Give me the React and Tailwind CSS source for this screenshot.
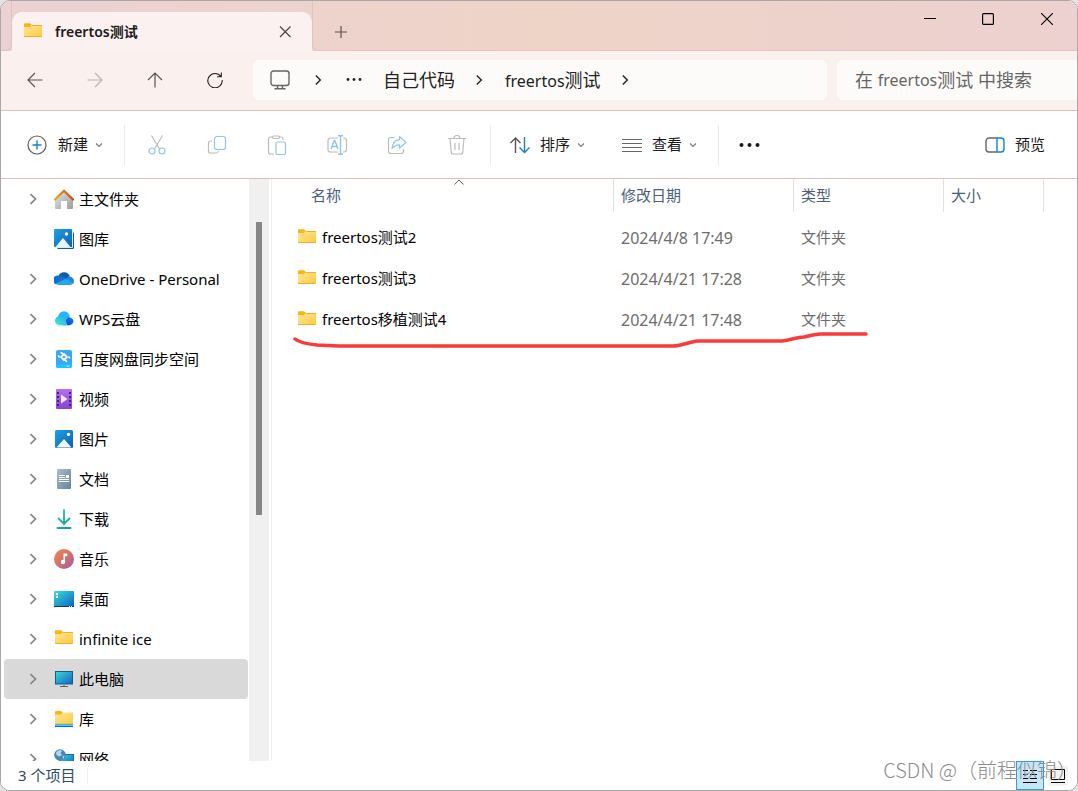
import { useState } from "react";

const FolderIcon = () => (
  <svg width="20" height="20" viewBox="0 0 20 20" className="shrink-0">
    <defs>
      <linearGradient id="folder" x1="0" y1="0" x2="1" y2="1">
        <stop offset="0" stopColor="#ffe6a0" />
        <stop offset="1" stopColor="#ffc938" />
      </linearGradient>
    </defs>
    <path d="M1 2.200a1 1 0 0 1 1-1h5l2 1.800v3H1z" fill="#fbb414" />
    <path d="M1 5h6l2-2h9.400a.6.6 0 0 1 .6.6V14.400a.6.6 0 0 1-.6.6H1.600a.6.6 0 0 1-.6-.6z" fill="url(#folder)" />
    <path d="M1 14.500h18M9 3.500h10" stroke="#efb02b" />
  </svg>
);

const HomeIcon = () => (
  <svg width="20" height="20" viewBox="0 0 20 20" className="shrink-0">
    <defs>
      <linearGradient id="wall" x1="0" y1="0" x2="1" y2="1">
        <stop offset="0" stopColor="#e6e6e6" />
        <stop offset="1" stopColor="#9c9c9c" />
      </linearGradient>
      <linearGradient id="roof" x1="0" y1="0" x2="1" y2="0">
        <stop offset="0" stopColor="#f2a01f" />
        <stop offset="1" stopColor="#d1430d" />
      </linearGradient>
    </defs>
    <path d="M1 9.500L10 1.500l9 8V19a1 1 0 0 1-1 1h-5v-8H7v8H2a1 1 0 0 1-1-1z" fill="url(#wall)" />
    <path d="M1 10.500L10 1.700l9 8.800" fill="none" stroke="url(#roof)" strokeWidth="2.200" strokeLinecap="round" strokeLinejoin="round" />
  </svg>
);

const GalleryIcon = () => (
  <svg width="20" height="20" viewBox="0 0 20 20" className="shrink-0">
    <defs>
      <linearGradient id="sky" x1="0" y1="0" x2="1" y2="1">
        <stop offset="0" stopColor="#1fa2e4" />
        <stop offset="1" stopColor="#0a5fb4" />
      </linearGradient>
    </defs>
    <rect x="3" y="3" width="17" height="17" rx="1.500" fill="#0f5ba7" />
    <path d="M18.500 1v17.500H1" fill="none" stroke="#d8ecfa" />
    <rect x="0" y="0" width="18" height="18" rx="1" fill="url(#sky)" />
    <path d="M1.500 18l7.500-9 7.500 9z" fill="#e9f5fd" />
    <circle cx="12.500" cy="5" r="1.700" fill="#fff" />
  </svg>
);

const PictureIcon = () => (
  <svg width="20" height="20" viewBox="0 0 20 20" className="shrink-0">
    <rect x="1" y="1" width="18" height="18" rx="1.500" fill="url(#sky)" />
    <path d="M2.500 18.500l7.500-8.500 7.500 8.500z" fill="#f2f9fe" />
    <circle cx="14.500" cy="5.500" r="1.700" fill="#fff" />
  </svg>
);

const OneDriveIcon = () => (
  <svg width="20" height="20" viewBox="0 0 20 20" className="shrink-0">
    <path d="M4.500 7A6 6 0 0 1 15.800 7.500L10 11z" fill="#0a5cb0" />
    <path d="M10 11l4-3.200a4.600 4.600 0 0 1 6 4.400 4 4 0 0 1-1 2.800z" fill="#1a86dc" />
    <path d="M4.500 6.800c2-.4 3.500.2 5.500 1.500l3 2-11 5A4.300 4.300 0 0 1 4.500 6.800z" fill="#0d70cf" />
    <path d="M1.500 14.500L11.200 10c2 .2 5.800 2.200 7.800 4.300a3.500 3.500 0 0 1-2.700 1.700H4.500a4 4 0 0 1-3-1.500z" fill="#29a4ea" />
  </svg>
);

const WpsIcon = () => (
  <svg width="20" height="20" viewBox="0 0 20 20" className="shrink-0">
    <defs>
      <linearGradient id="wpsLeft" x1="0" y1="1" x2="1" y2="0">
        <stop offset="0" stopColor="#3df0c0" />
        <stop offset="1" stopColor="#25a4ff" />
      </linearGradient>
      <linearGradient id="wpsRight" x1="0" y1="1" x2="1" y2="0">
        <stop offset="0" stopColor="#0040c8" />
        <stop offset="1" stopColor="#107cf5" />
      </linearGradient>
    </defs>
    <circle cx="10" cy="8" r="5.800" fill="#26b5fb" />
    <path d="M8 16.200l6-7.700A4.800 4.800 0 0 1 19.500 12a4.300 4.300 0 0 1-4.500 4.200z" fill="url(#wpsRight)" />
    <path d="M5.500 7.200c3 0 4.500 2 6 4.300l2 4.700h-8a4.500 4.500 0 0 1 0-9z" fill="url(#wpsLeft)" />
  </svg>
);

const BaiduIcon = () => (
  <svg width="20" height="20" viewBox="0 0 20 20" className="shrink-0">
    <rect x="2" y="1" width="16" height="18" rx="2" fill="#38a7fb" />
    <path d="M2 15.500h16V17a2 2 0 0 1-2 2H4a2 2 0 0 1-2-2z" fill="#15c9f8" />
    <path d="M12.500 17h3" stroke="#d7f7ff" />
    <path d="M10 5l3 3-3 3-3-3z" fill="none" stroke="#fff" strokeWidth="1.800" strokeLinejoin="round" />
    <path d="M8.500 4.500L7.200 3.800M5.200 8L4.500 7M14.800 8l.8.800M11.500 11.500l1 .8" stroke="#fff" strokeWidth="1.600" strokeLinecap="round" />
  </svg>
);

const VideoIcon = () => (
  <svg width="20" height="20" viewBox="0 0 20 20" className="shrink-0">
    <defs>
      <linearGradient id="film" x1="0" y1="0" x2="0" y2="1">
        <stop offset="0" stopColor="#b571f2" />
        <stop offset="1" stopColor="#8640d8" />
      </linearGradient>
    </defs>
    <rect x="2" y="0" width="16" height="20" rx="1" fill="url(#film)" />
    <path d="M4 3v15M16 3v15" stroke="#43256e" strokeWidth="2" strokeDasharray="2 2" />
    <path d="M7 5.500l6.500 4.500L7 14.500z" fill="#f2eafa" />
  </svg>
);

const DocumentIcon = () => (
  <svg width="20" height="20" viewBox="0 0 20 20" className="shrink-0">
    <defs>
      <linearGradient id="paper" x1="0" y1="0" x2="1" y2="1">
        <stop offset="0" stopColor="#a9bdd3" />
        <stop offset="1" stopColor="#63819f" />
      </linearGradient>
    </defs>
    <rect x="3" y="0" width="14" height="20" rx="1" fill="url(#paper)" />
    <path d="M5 6.500h6M5 8.500h6M5 10.500h10M5 12.500h10" stroke="#fff" />
    <rect x="12" y="6" width="3" height="3" fill="#fff" />
  </svg>
);

const DownloadIcon = () => (
  <svg width="20" height="20" viewBox="0 0 20 20" className="shrink-0">
    <defs>
      <linearGradient id="down" gradientUnits="userSpaceOnUse" x1="4" y1="0" x2="16" y2="20">
        <stop offset="0" stopColor="#36cf90" />
        <stop offset="1" stopColor="#0b9c9c" />
      </linearGradient>
    </defs>
    <path d="M10 1v13M4.500 9.500L10 15l5.500-5.500M3.500 19h13" fill="none" stroke="url(#down)" strokeWidth="1.900" strokeLinecap="round" />
  </svg>
);

const MusicIcon = () => (
  <svg width="20" height="20" viewBox="0 0 20 20" className="shrink-0">
    <defs>
      <linearGradient id="disc" x1="0" y1="0" x2="1" y2="1">
        <stop offset="0" stopColor="#ef8b51" />
        <stop offset="0.600" stopColor="#cc6b74" />
        <stop offset="1" stopColor="#8f5fb3" />
      </linearGradient>
    </defs>
    <circle cx="10" cy="10" r="10" fill="url(#disc)" />
    <path d="M9.500 4.500h3.800v2.700h-2.300v5.800h-1.500z" fill="#fff" />
    <circle cx="9" cy="13" r="2.200" fill="#fff" />
  </svg>
);

const DesktopIcon = () => (
  <svg width="20" height="20" viewBox="0 0 20 20" className="shrink-0">
    <defs>
      <linearGradient id="screen" x1="0" y1="0" x2="1" y2="1">
        <stop offset="0" stopColor="#3bdadf" />
        <stop offset="1" stopColor="#0c64bf" />
      </linearGradient>
    </defs>
    <rect x="0" y="2" width="20" height="16" rx="1" fill="url(#screen)" />
    <path d="M0 17.500h20" stroke="#0c3c70" />
    <path d="M15 17.500h3" stroke="#fff" strokeDasharray="1 1" />
    <path d="M3 4v5" stroke="#fff" strokeWidth="2" strokeDasharray="2 1" />
  </svg>
);

const ComputerIcon = () => (
  <svg width="20" height="20" viewBox="0 0 20 20" className="shrink-0">
    <rect x="1.500" y="2.500" width="17" height="12.500" fill="url(#screen)" stroke="#1d5b83" />
    <path d="M10 15v2" stroke="#8d979f" strokeWidth="2" />
    <path d="M6 17.500h8" stroke="#5b6368" />
  </svg>
);

const LibraryIcon = () => (
  <svg width="20" height="20" viewBox="0 0 20 20" className="shrink-0">
    <path d="M1 3a1 1 0 0 1 1-1h5l2 1.800v3H1z" fill="#fbb414" />
    <path d="M1 5.500h6l2-2h10V16H1z" fill="url(#folder)" />
    <path d="M1 15.500h18" stroke="#2cc4ea" strokeWidth="1.500" />
    <path d="M1 17.300h18" stroke="#126fb7" strokeWidth="1.500" />
  </svg>
);

const NetworkIcon = () => (
  <svg width="20" height="20" viewBox="0 0 20 20" className="shrink-0">
    <rect x="5.500" y="5.500" width="14" height="11" fill="url(#screen)" stroke="#1d6f93" />
    <circle cx="6" cy="6" r="5.800" fill="#4888b4" />
    <path d="M2 3.500C4 1 6 1 8 1.500L6.500 4 8 6 5 7.500 2.500 6zM8.500 6.500l2 1-1.500 3z" fill="#b9d6e8" />
  </svg>
);

const Chevron = () => (
  <svg width="12" height="12" viewBox="0 0 12 12" className="shrink-0" fill="none" stroke="#868686" strokeWidth="1.700">
    <path d="M3.500 1.200L8.500 6l-5 4.800" />
  </svg>
);

const Caret = () => (
  <svg width="8" height="8" viewBox="0 0 8 8" fill="none" stroke="#777" strokeWidth="1.100">
    <path d="M1 2.500l3 3 3-3" />
  </svg>
);

const PathArrow = ({ className }) => (
  <svg width="12" height="12" viewBox="0 0 12 12" className={className} fill="none" stroke="#222" strokeWidth="1.400">
    <path d="M3.800 1.500L8.300 6l-4.500 4.500" />
  </svg>
);

const places = [
  { name: "主文件夹", icon: HomeIcon },
  { name: "图库", icon: GalleryIcon, leaf: true },
  { name: "OneDrive - Personal", icon: OneDriveIcon },
  { name: "WPS云盘", icon: WpsIcon },
  { name: "百度网盘同步空间", icon: BaiduIcon },
  { name: "视频", icon: VideoIcon },
  { name: "图片", icon: PictureIcon },
  { name: "文档", icon: DocumentIcon },
  { name: "下载", icon: DownloadIcon },
  { name: "音乐", icon: MusicIcon },
  { name: "桌面", icon: DesktopIcon },
  { name: "infinite ice", icon: FolderIcon },
  { name: "此电脑", icon: ComputerIcon },
  { name: "库", icon: LibraryIcon },
  { name: "网络", icon: NetworkIcon },
];

const files = [
  { name: "freertos测试2", date: "2024/4/8 17:49", type: "文件夹" },
  { name: "freertos测试3", date: "2024/4/21 17:28", type: "文件夹" },
  { name: "freertos移植测试4", date: "2024/4/21 17:48", type: "文件夹" },
];

const TitleBar = () => (
  <header className="flex h-[50px] shrink-0 bg-linear-to-r from-[#ecd1d4] via-[#eed4c7] to-[#ecd1d0]">
    <div className="w-[11px] rounded-br-md border-b border-r border-[#dfc3c0]" />
    <div className="flex w-[300px] mt-[11px] pl-[11px] pr-[19px] items-center rounded-t-[10px] bg-[#faf1f0]">
      <FolderIcon />
      <span className="ml-3 flex-1 text-sm font-semibold text-[#1b1b1b]">freertos测试</span>
      <button aria-label="关闭标签页">
        <svg width="16" height="16" viewBox="0 0 16 16" stroke="#444" strokeWidth="1.100">
          <path d="M3 2.500l10.500 10.500M13.500 2.500L3 13" />
        </svg>
      </button>
    </div>
    <div className="flex flex-1 rounded-bl-md border-b border-l border-[#dfc3c0]">
      <button aria-label="新建标签页" className="ml-5 mt-3 self-center">
        <svg width="16" height="16" viewBox="0 0 16 16" stroke="#555" strokeWidth="1.200">
          <path d="M8 2v12M2 8h12" />
        </svg>
      </button>
      <div className="ml-auto flex h-9">
        <button aria-label="最小化" className="flex w-[58px] items-center justify-center">
          <svg width="12" height="12" viewBox="0 0 12 12" stroke="#000">
            <path d="M0 5.500h12" />
          </svg>
        </button>
        <button aria-label="最大化" className="flex w-[58px] items-center justify-center">
          <svg width="12" height="12" viewBox="0 0 12 12" fill="none" stroke="#000" strokeWidth="1.200">
            <rect x="0.600" y="0.600" width="10.800" height="10.800" rx="1" />
          </svg>
        </button>
        <button aria-label="关闭" className="flex w-[60px] items-center justify-center">
          <svg width="12" height="12" viewBox="0 0 12 12" stroke="#000" strokeWidth="1.100">
            <path d="M0 0l12 12M12 0L0 12" />
          </svg>
        </button>
      </div>
    </div>
  </header>
);

const NavBar = () => {
  const [query, setQuery] = useState("");

  return (
    <div className="flex h-[60px] shrink-0 items-center border-b border-[#dcc0ba] bg-[#faf1ef] pb-px pl-1">
      <button aria-label="后退" className="flex w-[60px] justify-center">
        <svg width="16" height="16" viewBox="0 0 16 16" fill="none" stroke="#555" strokeWidth="1.200">
          <path d="M15.500 8H1M8 1L1 8l7 7" />
        </svg>
      </button>
      <button aria-label="前进" className="flex w-[60px] justify-center">
        <svg width="16" height="16" viewBox="0 0 16 16" fill="none" stroke="#bbb4b2" strokeWidth="1.200">
          <path d="M.5 8H15M8 1l7 7-7 7" />
        </svg>
      </button>
      <button aria-label="向上" className="flex w-[60px] justify-center">
        <svg width="16" height="16" viewBox="0 0 16 16" fill="none" stroke="#555" strokeWidth="1.200">
          <path d="M8 15.500V1M1 8l7-7 7 7" />
        </svg>
      </button>
      <button aria-label="刷新" className="flex w-[60px] justify-center">
        <svg width="16" height="16" viewBox="0 0 16 16" fill="none" stroke="#222" strokeWidth="1.100">
          <path d="M13.900 4.500A7.200 7.200 0 1 0 15.200 8M14.300 .5v4.300h-4.300" />
        </svg>
      </button>

      {/* address */}
      <div className="ml-2 flex h-10 flex-1 items-center rounded-md bg-[#fdfbfa] pl-[17px] text-lg text-[#222]">
        <svg width="20" height="20" viewBox="0 0 20 20" fill="none" stroke="#666" strokeWidth="1.400">
          <rect x="1" y="1" width="18" height="14.500" rx="2.500" />
          <path d="M7.500 15.500v3M12.500 15.500v3M4.500 18.800h11" />
        </svg>
        <PathArrow className="ml-[22px]" />
        <svg width="16" height="4" viewBox="0 0 16 4" className="ml-[22px]" fill="#222">
          <circle cx="2" cy="1.500" r="1.400" />
          <circle cx="8" cy="1.500" r="1.400" />
          <circle cx="14" cy="1.500" r="1.400" />
        </svg>
        <a href="#code" className="ml-[21px]">自己代码</a>
        <PathArrow className="ml-[18px]" />
        <a href="#freertos" className="ml-5">
          <span className="text-base">freertos</span>测试
        </a>
        <PathArrow className="ml-[18px]" />
      </div>

      {/* search */}
      <div className="relative ml-[10px] h-10 w-[240px] rounded-l-md bg-[#fdfbfa] text-lg text-[#666]">
        <input
          id="search"
          aria-label="搜索"
          className="h-10 w-full bg-transparent px-[18px] outline-none"
          value={query}
          onChange={(e) => setQuery(e.target.value)}
        />
        {!query && (
          <label htmlFor="search" className="pointer-events-none absolute inset-0 flex items-center whitespace-pre pl-[18px]">
            在 <span className="text-base">freertos</span>测试 中搜索
          </label>
        )}
      </div>
    </div>
  );
};

const ToolBar = () => (
  <div className="flex h-[68px] shrink-0 items-center border-b border-[#dcc0ba] bg-white pl-[26px] pr-8 text-[15px] text-[#1b1b1b]">
    <button className="flex items-center">
      <svg width="20" height="20" viewBox="0 0 20 20" fill="none">
        <circle cx="10" cy="10" r="9" stroke="#5c5c5c" strokeWidth="1.200" />
        <path d="M10 5.500v9M5.500 10h9" stroke="#1380d8" strokeWidth="1.400" />
      </svg>
      <span className="ml-[11px] mr-[7px]">新建</span>
      <Caret />
    </button>
    <div className="ml-[21px] mr-[2px] h-10 w-px bg-[#eaeaea]" />
    <button aria-label="剪切" className="flex w-[60px] justify-center">
      <svg width="20" height="20" viewBox="0 0 20 20" fill="none" strokeWidth="1.200">
        <path d="M4.500.5L12.500 14M15.500.5L7.500 14" stroke="#bcbcbc" />
        <circle cx="5" cy="16" r="3" stroke="#90c4ee" />
        <circle cx="15" cy="16" r="3" stroke="#90c4ee" />
      </svg>
    </button>
    <button aria-label="复制" className="flex w-[60px] justify-center">
      <svg width="20" height="20" viewBox="0 0 20 20" fill="none" strokeWidth="1.200">
        <path d="M5 6H3.500a2 2 0 0 0-2 2v8a2 2 0 0 0 2 2H9a2.500 2.500 0 0 0 2.500-2" stroke="#bcbcbc" />
        <rect x="7.500" y="1.500" width="11" height="13" rx="2.500" stroke="#90c4ee" />
      </svg>
    </button>
    <button aria-label="粘贴" className="flex w-[60px] justify-center">
      <svg width="20" height="20" viewBox="0 0 20 20" fill="none" strokeWidth="1.200">
        <path d="M6 2H3.500a2 2 0 0 0-2 2v13a2 2 0 0 0 2 2H7M12 2h2a2 2 0 0 1 2 2v1" stroke="#bcbcbc" />
        <rect x="5.500" y="1" width="7" height="2.500" rx="1.200" stroke="#bcbcbc" />
        <rect x="9" y="7" width="9.500" height="12.500" rx="1.500" stroke="#90c4ee" />
      </svg>
    </button>
    <button aria-label="重命名" className="flex w-[60px] justify-center">
      <svg width="20" height="20" viewBox="0 0 20 20" fill="none" strokeWidth="1.200">
        <path d="M11 3H3.500A2.500 2.500 0 0 0 1 5.500v9A2.500 2.500 0 0 0 3.500 17H11M16 3h1a2.500 2.500 0 0 1 2.500 2.500v9A2.500 2.500 0 0 1 17 17h-1" stroke="#bcbcbc" />
        <path d="M4 14l3.200-8.500h.6L11 14M5 11.500h5M13.500 1v18M11 .8h5M11 19.200h5" stroke="#90c4ee" strokeWidth="1.400" />
      </svg>
    </button>
    <button aria-label="共享" className="flex w-[60px] justify-center">
      <svg width="20" height="20" viewBox="0 0 20 20" fill="none" strokeWidth="1.200" strokeLinejoin="round">
        <path d="M7.500 2.500H4A2.500 2.500 0 0 0 1.500 5v11A2.500 2.500 0 0 0 4 18.500h10a2.500 2.500 0 0 0 2.500-2.500v-2" stroke="#bcbcbc" />
        <path d="M12.500 1.500L19 7.500l-6.500 5.500V9.800c-3 0-5 .7-7.500 3.700.5-4.500 3-8.500 7.500-8.800z" stroke="#90c4ee" />
      </svg>
    </button>
    <button aria-label="删除" className="flex w-[60px] justify-center">
      <svg width="20" height="20" viewBox="0 0 20 20" fill="none" stroke="#bcbcbc" strokeWidth="1.200">
        <path d="M1 3.500h18M7 3.500a3 3 0 0 1 6 0M3 3.500l1.200 13.500a2 2 0 0 0 2 2h7.600a2 2 0 0 0 2-2L17 3.500M8 8v7M12 8v7" />
      </svg>
    </button>
    <div className="ml-[3px] h-10 w-px bg-[#eaeaea]" />
    <button className="ml-[19px] flex items-center">
      <svg width="20" height="20" viewBox="0 0 20 20" fill="none" strokeWidth="1.400">
        <path d="M5.500 18V3M.5 8l5-5 5 5" stroke="#555" />
        <path d="M14.500 2v15.500M9.500 12.500l5 5 5-5" stroke="#1380d8" />
      </svg>
      <span className="ml-[10px] mr-[7px]">排序</span>
      <Caret />
    </button>
    <button className="ml-[37px] flex items-center">
      <svg width="20" height="20" viewBox="0 0 20 20" stroke="#666">
        <path d="M0 4.500h20M0 8.500h20M0 12.500h20M0 16.500h20" />
      </svg>
      <span className="ml-[10px] mr-[7px]">查看</span>
      <Caret />
    </button>
    <div className="ml-[21px] h-10 w-px bg-[#eaeaea]" />
    <button aria-label="更多" className="ml-5">
      <svg width="22" height="6" viewBox="0 0 22 6" fill="#1b1b1b">
        <circle cx="2.500" cy="3" r="2" />
        <circle cx="10.500" cy="3" r="2" />
        <circle cx="18.500" cy="3" r="2" />
      </svg>
    </button>
    <button className="ml-auto flex items-center">
      <svg width="20" height="20" viewBox="0 0 20 20" fill="none" strokeWidth="1.400">
        <path d="M11.500 3H4a3 3 0 0 0-3 3v8a3 3 0 0 0 3 3h7.500" stroke="#666" />
        <path d="M12 3h4a3 3 0 0 1 3 3v8a3 3 0 0 1-3 3h-4z" stroke="#1380d8" />
      </svg>
      <span className="ml-[10px]">预览</span>
    </button>
  </div>
);

const Sidebar = () => {
  const [selected, setSelected] = useState("此电脑");

  return (
    <aside className="flex w-[271px] shrink-0 overflow-hidden border-r border-[#f0f0f0]">
      <ul className="w-[248px] pl-[3px] pr-px">
        {places.map(({ name, icon: Icon, leaf }) => (
          <li key={name}>
            <button
              onClick={() => setSelected(name)}
              className={`flex h-10 w-full items-center rounded-sm pl-[23px] text-[15px] text-black ${
                selected === name ? "bg-[#d9d9d9]" : ""
              }`}
            >
              <span className="w-[27px]">{!leaf && <Chevron />}</span>
              <Icon />
              <span className="ml-[5px]">{name}</span>
            </button>
          </li>
        ))}
      </ul>
      {/* scrollbar */}
      <div className="w-5 bg-[#f0f0f0] pt-[43px] pl-[7px]">
        <div className="h-[293px] w-[6px] bg-[#868686]" />
      </div>
    </aside>
  );
};

const FileList = () => (
  <main className="relative min-w-0 flex-1">
    <table className="w-full table-fixed text-left text-[15px]">
      <colgroup>
        <col className="w-[342px]" />
        <col className="w-[180px]" />
        <col className="w-[150px]" />
        <col className="w-[100px]" />
        <col />
      </colgroup>
      <thead className="text-[#4c607a]">
        <tr>
          <th className="relative p-0 font-normal">
            <div className="mb-[5px] flex h-[33px] items-center border-r border-[#e3e3e3] pl-[39px]">名称</div>
            <svg width="10" height="6" viewBox="0 0 10 6" className="absolute left-[182px] top-0" fill="none" stroke="#666">
              <path d="M.5 5.500L5 1l4.500 4.500" />
            </svg>
          </th>
          <th className="p-0 font-normal">
            <div className="mb-[5px] flex h-[33px] items-center border-r border-[#e3e3e3] pl-[7px]">修改日期</div>
          </th>
          <th className="p-0 font-normal">
            <div className="mb-[5px] flex h-[33px] items-center border-r border-[#e3e3e3] pl-[7px]">类型</div>
          </th>
          <th className="p-0 font-normal">
            <div className="mb-[5px] flex h-[33px] items-center border-r border-[#e3e3e3] pl-[7px]">大小</div>
          </th>
          <td />
        </tr>
      </thead>
      <tbody className="text-[#6d6d6d]">
        {files.map((file) => (
          <tr key={file.name} className="h-[41px]">
            <td className="p-0 text-black">
              <div className="flex items-center pl-[25px]">
                <FolderIcon />
                <span className="ml-[5px]">{file.name}</span>
              </div>
            </td>
            <td className="p-0 pl-[7px] text-base">{file.date}</td>
            <td className="p-0 pl-[7px]">{file.type}</td>
            <td />
            <td />
          </tr>
        ))}
      </tbody>
    </table>

    {/* pen stroke under the last folder */}
    <svg width="600" height="30" viewBox="0 0 600 30" className="pointer-events-none absolute left-0 top-[150px]">
      <path
        d="M23 10c5 4 12 5 22 6l22 1h334c8 0 15-4 25-5h84c10-1 14-4 22-4 8-2 12-3 17-3h45"
        fill="none"
        stroke="#fd3a3a"
        strokeWidth="3.500"
        strokeLinecap="round"
        strokeLinejoin="round"
      />
    </svg>
  </main>
);

const StatusBar = () => (
  <footer className="relative flex h-[29px] shrink-0 items-center bg-white pl-[17px] pr-[9px] text-[15px] text-[#2f4a6b]">
    <span>3 个项目</span>
    <div className="ml-3 h-4 w-px bg-[#eee]" />
    <button aria-label="详细信息" className="ml-auto flex h-[29px] w-7 items-center justify-center border border-[#2f9fd5] bg-[#c6e6f7]">
      <svg width="14" height="14" viewBox="0 0 14 14" stroke="#000">
        <path d="M0 1.500h5M7 1.500h7M0 5.500h5M7 5.500h7M0 9.500h5M7 9.500h7M0 13.500h14" />
      </svg>
    </button>
    <button aria-label="大图标" className="ml-1 flex h-5 w-5 items-center justify-center bg-[#f3f3f3]">
      <svg width="14" height="14" viewBox="0 0 14 14" fill="none" stroke="#000">
        <path d="M.5.5h13v10H.5zM0 13.500h14" />
      </svg>
    </button>
    <span className="pointer-events-none absolute bottom-[6px] right-0 whitespace-nowrap font-['Noto_Sans_CJK_SC',sans-serif] text-[20px] font-light leading-7 text-[#8c8c8c]">
      CSDN @（前程似锦）
    </span>
  </footer>
);

const App = () => {
  return (
    <div className="h-screen bg-[#e4e4e4] font-['Noto_Sans','Noto_Sans_CJK_SC',sans-serif]">
      <div className="flex h-full flex-col overflow-hidden rounded-[10px] border border-[#a8a8a8] bg-white">
        <TitleBar />
        <NavBar />
        <ToolBar />
        <div className="flex min-h-0 flex-1 overflow-hidden">
          <Sidebar />
          <FileList />
        </div>
        <StatusBar />
      </div>
    </div>
  );
};

export default App;
